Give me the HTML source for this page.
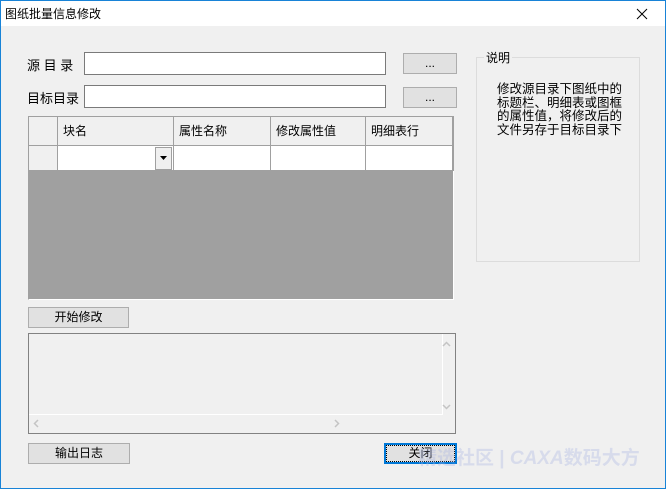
<!DOCTYPE html><html><head><meta charset="utf-8"><style>
*{margin:0;padding:0;box-sizing:border-box}
body{width:666px;height:489px;background:#f0f0f0;font-family:"Liberation Sans","Noto Sans CJK SC",sans-serif;font-size:12px;color:#000;position:relative;overflow:hidden}
.win{position:absolute;left:0;top:0;width:666px;height:489px;border:1px solid #1883d7}
.title{position:absolute;left:1px;top:1px;width:664px;height:25px;background:#fff}
.a{position:absolute}
.inp{position:absolute;background:#fff;border:1px solid #7a7a7a}
.btn{position:absolute;background:#e1e1e1;border:1px solid #adadad;text-align:center;line-height:18px}
.cell{position:absolute;border-right:1px solid #a0a0a0;border-bottom:1px solid #a0a0a0;padding-left:5px;line-height:28px}
</style></head><body>
<div class="win"></div>
<div class="title"></div>
<div class="a" style="left:5px;top:5px;font-size:12px">图纸批量信息修改</div>
<svg class="a" style="left:636px;top:8px" width="12" height="12"><path d="M1 1L11 11M11 1L1 11" stroke="#000" stroke-width="1"/></svg>

<div class="a" style="left:27px;top:55px;font-size:13px">源&nbsp;目&nbsp;录</div>
<div class="inp" style="left:84px;top:52px;width:302px;height:23px"></div>
<div class="btn" style="left:403px;top:53px;width:54px;height:21px">...</div>
<div class="a" style="left:27px;top:88px;font-size:13px">目标目录</div>
<div class="inp" style="left:84px;top:85px;width:302px;height:23px"></div>
<div class="btn" style="left:403px;top:87px;width:54px;height:21px">...</div>

<div class="a" style="left:28px;top:116px;width:426px;height:184px;background:#a0a0a0;border:1px solid #a0a0a0;border-right-color:#fff;border-bottom-color:#fff"></div>
<div class="a" style="left:28px;top:116px;width:426px;height:55px;background:#fff;border:1px solid #a0a0a0;border-bottom:none"></div>
<div class="cell" style="left:29px;top:117px;width:29px;height:29px;background:#f0f0f0"></div>
<div class="cell" style="left:58px;top:117px;width:116px;height:29px;background:#f0f0f0">块名</div>
<div class="cell" style="left:174px;top:117px;width:97px;height:29px;background:#f0f0f0">属性名称</div>
<div class="cell" style="left:271px;top:117px;width:95px;height:29px;background:#f0f0f0">修改属性值</div>
<div class="cell" style="left:366px;top:117px;width:87px;height:29px;background:#f0f0f0">明细表行</div>
<div class="cell" style="left:29px;top:146px;width:29px;height:25px;background:#f0f0f0"></div>
<div class="cell" style="left:58px;top:146px;width:116px;height:25px;background:#fff"></div>
<div class="cell" style="left:174px;top:146px;width:97px;height:25px;background:#fff"></div>
<div class="cell" style="left:271px;top:146px;width:95px;height:25px;background:#fff"></div>
<div class="cell" style="left:366px;top:146px;width:87px;height:25px;background:#fff"></div>
<div class="a" style="left:155px;top:147px;width:17px;height:23px;background:#f0f0f0;border:1px solid #a0a0a0"></div>
<svg class="a" style="left:160px;top:156px" width="7" height="5"><path d="M0 0H7L3.5 4Z" fill="#000"/></svg>

<div class="a" style="left:476px;top:57px;width:164px;height:205px;border:1px solid #dcdcdc"></div>
<div class="a" style="left:484px;top:49px;background:#f0f0f0;padding:0 2px;font-size:12px">说明</div>
<div class="a" style="left:497px;top:83px;width:130px;font-size:12.5px;line-height:13.5px">修改源目录下图纸中的标题栏、明细表或图框的属性值，将修改后的文件另存于目标目录下</div>

<div class="btn" style="left:28px;top:307px;width:101px;height:21px;line-height:19px">开始修改</div>
<div class="a" style="left:28px;top:333px;width:428px;height:101px;border:1px solid #828282"></div>
<div class="a" style="left:29px;top:334px;width:414px;height:81px;border-right:1px solid #fff;border-bottom:1px solid #fff"></div>
<svg class="a" style="left:345px;top:341px" width="9" height="6"></svg>
<svg class="a" style="left:345px;top:341px" width="9" height="6"></svg>
<svg class="a" style="left:442px;top:341px" width="9" height="6"><path d="M1 5L4.5 1.5L8 5" stroke="#c4c4c4" fill="none" stroke-width="1.5"/></svg>
<svg class="a" style="left:442px;top:404px" width="9" height="6"><path d="M1 1L4.5 4.5L8 1" stroke="#c4c4c4" fill="none" stroke-width="1.5"/></svg>
<svg class="a" style="left:33px;top:419px" width="6" height="9"><path d="M5 1L1.5 4.5L5 8" stroke="#c4c4c4" fill="none" stroke-width="1.5"/></svg>
<svg class="a" style="left:334px;top:419px" width="6" height="9"><path d="M1 1L4.5 4.5L1 8" stroke="#c4c4c4" fill="none" stroke-width="1.5"/></svg>

<div class="btn" style="left:28px;top:443px;width:102px;height:21px;line-height:19px">输出日志</div>
<div class="a" style="left:384px;top:443px;width:73px;height:21px;background:#e1e1e1;border:2px solid #0078d7"></div>
<div class="a" style="left:386px;top:445px;width:69px;height:17px;border:1px dotted #000;text-align:center;line-height:15px">关闭</div>
<div class="a" style="left:418px;top:443px;font-size:19px;font-weight:bold;color:rgba(170,180,225,0.35);white-space:nowrap">精选社区 | <i>CAXA</i>数码大方</div>
</body></html>
